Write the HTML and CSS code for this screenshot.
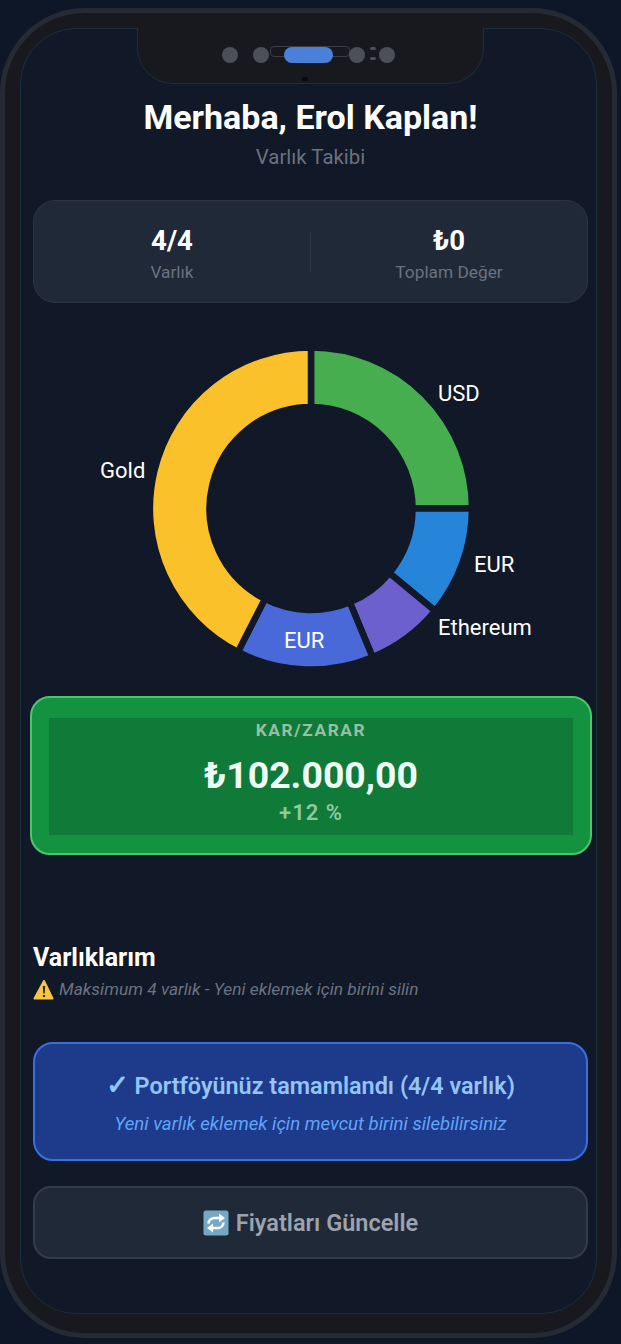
FILE: index.html
```html
<!DOCTYPE html>
<html lang="tr">
<head>
    <meta charset="UTF-8">
    <meta name="viewport" content="width=device-width, initial-scale=1.0">
    <title>Varlık Takibi</title>
    <link rel="stylesheet" href="styles.css">
</head>
<body>
    <div class="phone">
        <div class="screen">
            <!-- Notch -->
            <div class="notch">
                <span class="dot"></span>
                <span class="dot"></span>
                <span class="pill"></span>
                <span class="dot"></span>
                <span class="marks"><i></i><i></i></span>
                <span class="dot"></span>
                <span class="speck"></span>
            </div>

            <h1>Merhaba, Erol Kaplan!</h1>
            <p class="subtitle">Varlık Takibi</p>

            <!-- Stats -->
            <div class="stats">
                <div class="stat">
                    <div class="stat-value">4/4</div>
                    <div class="stat-label">Varlık</div>
                </div>
                <span class="stat-divider"></span>
                <div class="stat">
                    <div class="stat-value">₺0</div>
                    <div class="stat-label">Toplam Değer</div>
                </div>
            </div>

            <!-- Chart -->
            <svg class="chart" width="555" height="360" viewBox="33 330 555 360">
                <g transform="translate(311 508.5)" stroke="#111827" stroke-width="6.5">
                    <path fill="#47ae50" d="M0 -161A161 161 0 0 1 161 0L101.5 0A101.5 101.5 0 0 0 0 -101.5Z"/>
                    <path fill="#2684d9" d="M161 0A161 161 0 0 1 124.2 102.4L78.3 64.6A101.5 101.5 0 0 0 101.5 0Z"/>
                    <path fill="#6c60cf" d="M124.2 102.4A161 161 0 0 1 61.6 148.7L38.8 93.8A101.5 101.5 0 0 0 78.3 64.6Z"/>
                    <path fill="#4a69d8" d="M61.6 148.7A161 161 0 0 1 -73.1 143.5L-46.1 90.4A101.5 101.5 0 0 0 38.8 93.8Z"/>
                    <path fill="#fbc12b" d="M-73.1 143.5A161 161 0 0 1 0 -161L0 -101.5A101.5 101.5 0 0 0 -46.1 90.4Z"/>
                </g>
                <text x="100" y="478">Gold</text>
                <text x="438" y="401">USD</text>
                <text x="474" y="572">EUR</text>
                <text x="438" y="635">Ethereum</text>
                <text x="284" y="648">EUR</text>
            </svg>

            <!-- Profit / loss -->
            <div class="profit">
                <div class="profit-inner">
                    <div class="profit-label">KAR/ZARAR</div>
                    <div class="profit-value">₺102.000,00</div>
                    <div class="profit-percent">+12 %</div>
                </div>
            </div>

            <h2>Varlıklarım</h2>
            <p class="note">
                <svg class="note-icon" width="21" height="21" viewBox="0 0 21 21">
                    <path fill="#f7c63e" stroke="#f7c63e" stroke-width="2" stroke-linejoin="round" d="M11 2L1.5 19.5H19.5Z"/>
                    <path fill="#2b2413" d="M9.8 7H12.2L11.7 14.5H10.3ZM9.9 16H12.1V18H9.9Z"/>
                </svg>
                Maksimum 4 varlık - Yeni eklemek için birini silin
            </p>

            <!-- Portfolio complete -->
            <div class="complete">
                <div class="complete-title"><span class="check">✓</span> Portföyünüz tamamlandı (4/4 varlık)</div>
                <div class="complete-sub">Yeni varlık eklemek için mevcut birini silebilirsiniz</div>
            </div>

            <button class="refresh" type="button">
                <svg width="26" height="26" viewBox="0 0 26 26">
                    <rect x="0.5" y="0.5" width="25" height="25" rx="2.5" fill="#74a9c6"/>
                    <path fill="none" stroke="#fff" stroke-width="2.6" d="M5.5 13.5A6 6 0 0 1 11 8H17"/>
                    <path fill="#fff" d="M16 3.5L22 8L16 12.5Z"/>
                    <path fill="none" stroke="#fff" stroke-width="2.6" d="M20.5 12.5A6 6 0 0 1 15 18H9"/>
                    <path fill="#fff" d="M10 13.5L4 18L10 22.5Z"/>
                </svg>
                Fiyatları Güncelle
            </button>
        </div>
    </div>
</body>
</html>
```

FILE: styles.css
```css
* {
    box-sizing: border-box;
}
html, body {
    height: 100%;
}
body {
    margin: 0;
    background-color: #0e1728;
    font-family: Roboto, "Liberation Sans", sans-serif;
    overflow: hidden;
}
.phone {
    width: 617px;
    height: 1330px;
    margin-top: 8px;
    padding: 15px 15px 19px;
    background-color: #17191f;
    border: 5px solid #262a34;
    border-radius: 85px;
}
.screen {
    height: 100%;
    padding: 0 8px 0 12px;
    background-color: #111827;
    border: 1px solid #1a2f38;
    border-radius: 56px;
}

/* Notch */
.notch {
    position: relative;
    isolation: isolate;
    display: flex;
    align-items: center;
    width: 347px;
    height: 56px;
    margin: -1px 0 0 104px;
    padding: 0 0 2px 84px;
    background-color: #17191f;
    border: 1px solid #1a2f38;
    border-top: none;
    border-radius: 0 0 36px 36px;
}
.dot {
    width: 16px;
    height: 16px;
    margin-right: 15px;
    background-color: #4d4f56;
    border-radius: 50%;
}
.pill {
    position: relative;
    width: 49px;
    height: 16px;
    margin-right: 16px;
    background-color: #4a80d8;
    border-radius: 8px;
}
.pill::before {
    content: "";
    position: absolute;
    left: -14px;
    top: -1px;
    width: 78px;
    height: 9px;
    border: 1px solid #3a3d45;
    border-radius: 4px;
    z-index: -1;
}
.marks {
    display: flex;
    flex-direction: column;
    gap: 7px;
    width: 6px;
    margin: 0 3px 3px -10px;
}
.marks i {
    height: 3px;
    background-color: #4d4f56;
    border-radius: 2px;
}
.speck {
    position: absolute;
    left: 164px;
    bottom: 2px;
    width: 6px;
    height: 4px;
    background-color: #08090c;
    border-radius: 50%;
}

/* Heading */
h1 {
    margin: 13px 0 0;
    font-size: 34px;
    line-height: 40px;
    font-weight: 700;
    color: #fff;
    text-align: center;
}
.subtitle {
    margin: 8px 0 0;
    font-size: 20.4px;
    line-height: 24px;
    color: #6b7280;
    text-align: center;
}

/* Stats */
.stats {
    display: flex;
    align-items: center;
    height: 103px;
    margin-top: 31px;
    background-color: #1f2937;
    border: 1px solid #2b3544;
    border-radius: 22px;
}
.stat {
    flex: 1;
    text-align: center;
}
.stat-divider {
    width: 1px;
    height: 40px;
    background-color: #2d3747;
}
.stat-value {
    padding-top: 5px;
    font-size: 27.5px;
    line-height: 30px;
    font-weight: 700;
    color: #fff;
}
.stat-label {
    margin-top: 6px;
    font-size: 17.3px;
    line-height: 20px;
    color: #6b7280;
}

/* Chart */
.chart {
    display: block;
    margin-top: 27px;
}
.chart text {
    font-size: 22px;
    fill: #fff;
}

/* Profit */
.profit {
    height: 159px;
    margin: 6px -4px 0 -3px;
    padding: 20px 17px 18px;
    background-color: #13923f;
    border: 2px solid #4fc46e;
    border-radius: 20px;
}
.profit-inner {
    height: 117px;
    background-color: #107a38;
    text-align: center;
}
.profit-label {
    padding-top: 2px;
    font-size: 17.3px;
    line-height: 20px;
    font-weight: 700;
    letter-spacing: 1.6px;
    color: #98c0a4;
}
.profit-value {
    margin-top: 12px;
    font-size: 37.4px;
    line-height: 46px;
    font-weight: 700;
    color: #f0fdf4;
}
.profit-percent {
    margin-top: 2px;
    font-size: 22px;
    line-height: 26px;
    font-weight: 600;
    letter-spacing: 1px;
    color: #8ec9a0;
}

/* Assets */
h2 {
    margin: 88px 0 0;
    font-size: 25px;
    line-height: 30px;
    font-weight: 700;
    color: #fff;
}
.note {
    display: flex;
    align-items: center;
    gap: 5px;
    margin: 4px 0 0;
    font-size: 17.35px;
    line-height: 24px;
    font-style: italic;
    color: #6b7280;
}
.note-icon {
    flex-shrink: 0;
}
.complete {
    height: 119px;
    margin-top: 41px;
    padding-top: 26px;
    background-color: #1e3a8a;
    border: 2px solid #3b6fe0;
    border-radius: 20px;
    text-align: center;
}
.complete-title {
    font-size: 23.4px;
    line-height: 32px;
    font-weight: 600;
    color: #93c5fd;
}
.check {
    font-family: "DejaVu Sans", sans-serif;
    font-size: 27px;
    line-height: 24px;
    -webkit-text-stroke: 1px #93c5fd;
}
.complete-sub {
    margin-top: 10px;
    font-size: 18.6px;
    line-height: 24px;
    font-style: italic;
    color: #60a5fa;
}
.refresh {
    display: flex;
    align-items: center;
    justify-content: center;
    gap: 7px;
    width: 100%;
    height: 73px;
    margin-top: 25px;
    padding: 0;
    font-family: inherit;
    font-size: 23.5px;
    font-weight: 600;
    color: #9ca3af;
    background-color: #1f2937;
    border: 2px solid #323c4b;
    border-radius: 18px;
}
```
